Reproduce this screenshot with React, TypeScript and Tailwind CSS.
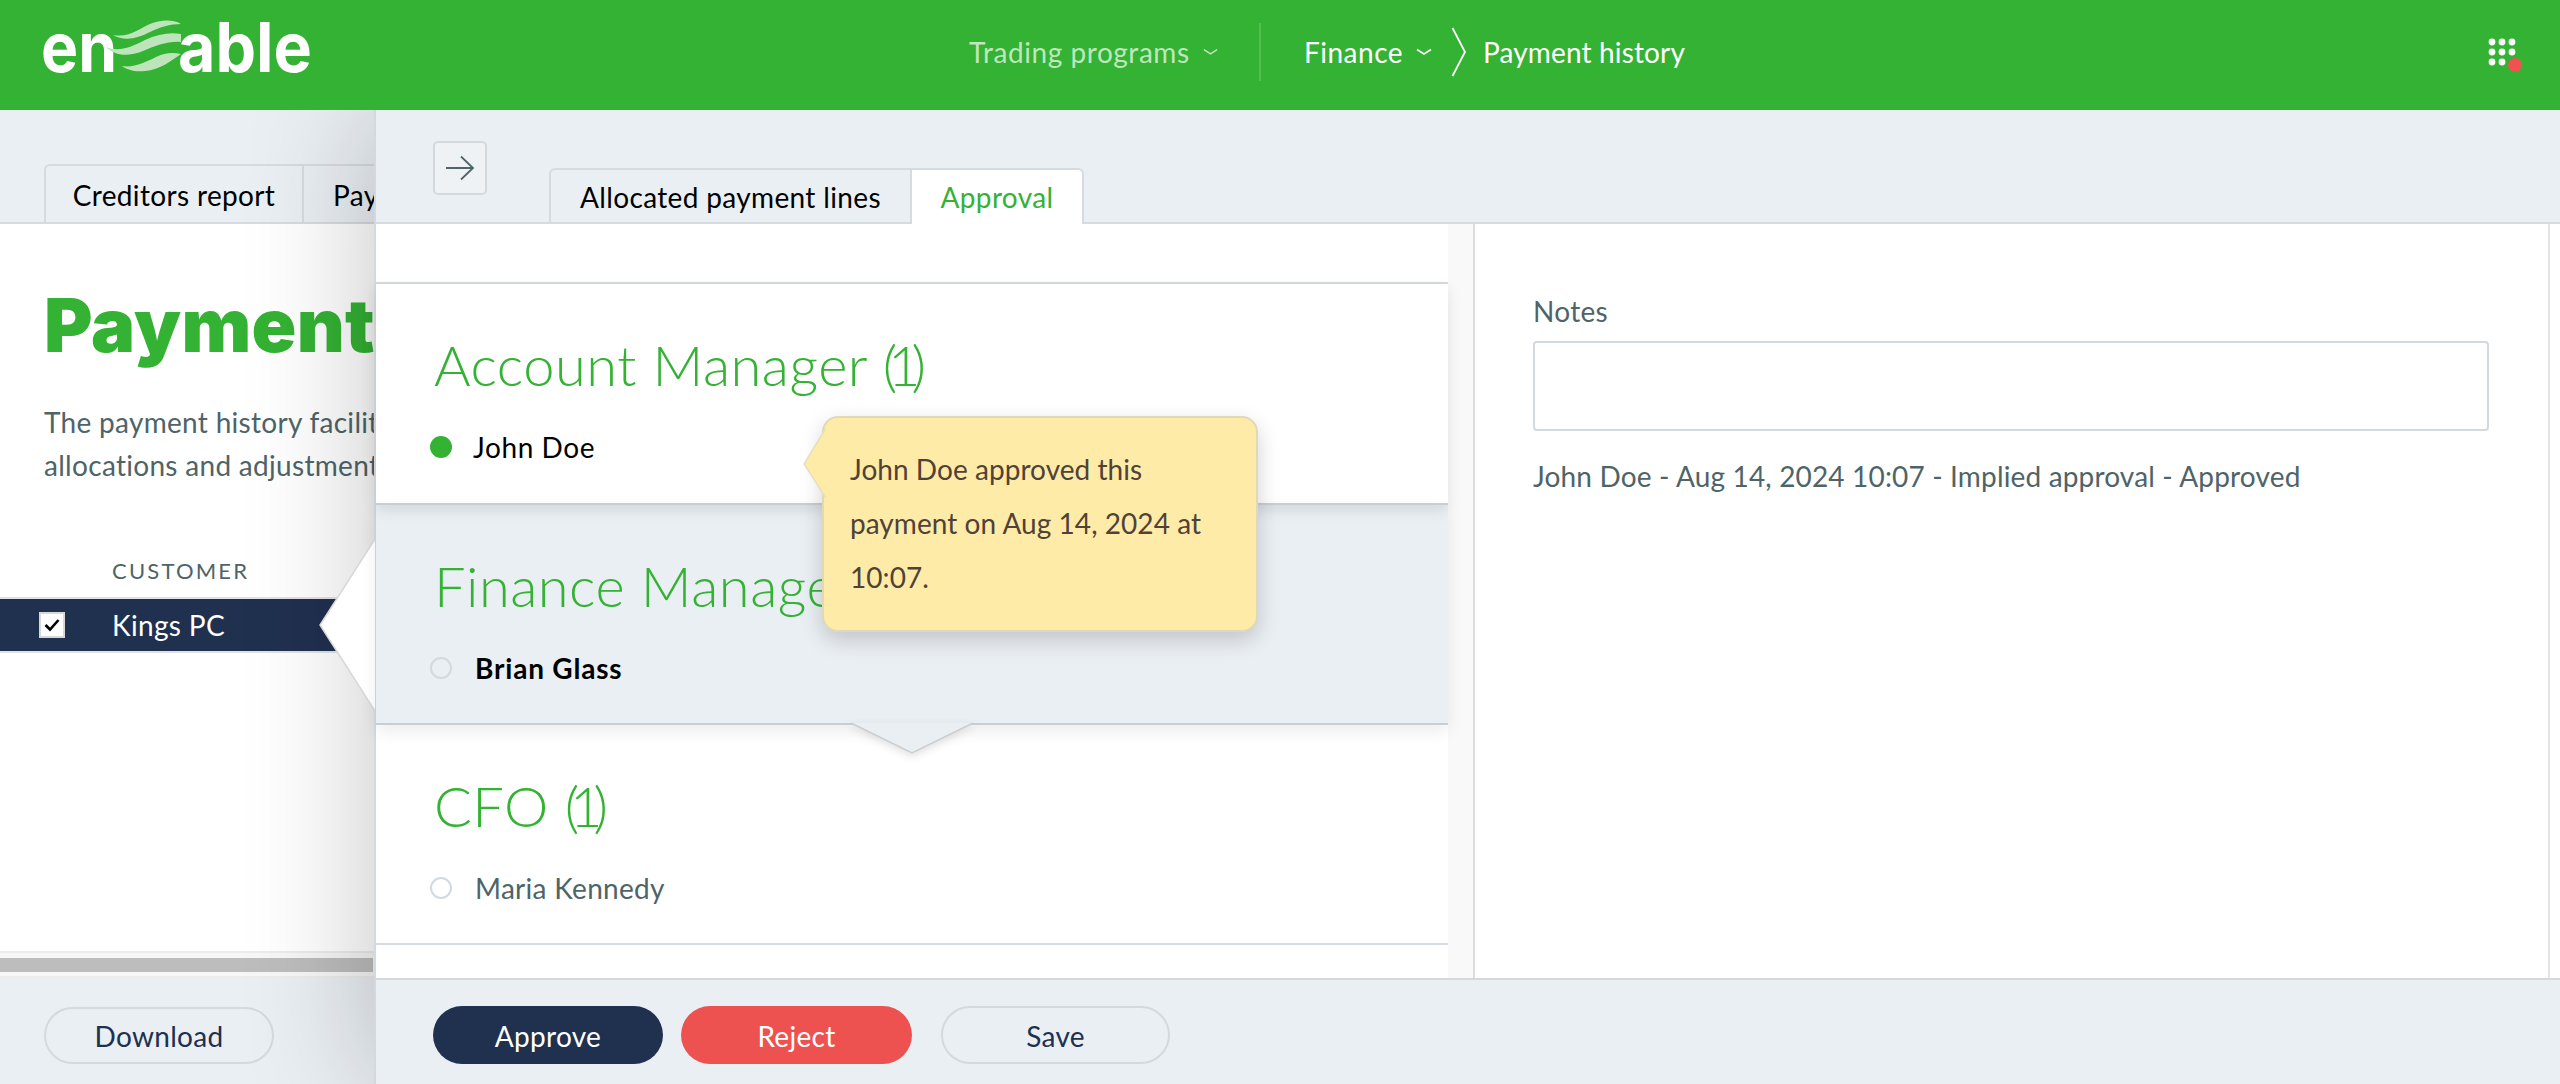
import React from "react";

const Chevron = ({ className }: { className: string }) => (
  <svg viewBox="0 0 16 8" className={className} fill="none" stroke="currentColor" strokeWidth="1.6">
    <path d="M1 1.5 L8 6 L15 1.5" />
  </svg>
);

const Logo = () => (
  <svg viewBox="40 15 275 62" className="w-[275px] h-[62px]">
    <text x="41" y="72" fontFamily="Inter" fontWeight="700" fontSize="69" fill="#fff" textLength="76" lengthAdjust="spacingAndGlyphs">en</text>
    <text x="178" y="72" fontFamily="Inter" fontWeight="700" fontSize="69" fill="#fff" textLength="134" lengthAdjust="spacingAndGlyphs">able</text>
    <g fill="#bde4bb">
      <path d="M113 35 C130 38 140 28 150 24 C160 20 172 19 181 24 C170 24 160 27 150 32 C138 38 125 42 113 35Z" />
      <path d="M106 47 C118 52 130 48 145 40 C158 34 170 32 181 34 L181 42 C168 41 155 46 143 51 C128 57 115 56 106 47Z" />
      <path d="M122 66 C134 68 146 62 156 57 C164 53 172 52 181 54 C172 60 160 70 145 71 C135 72 127 70 122 66Z" />
    </g>
  </svg>
);

const Dots = () => (
  <svg viewBox="0 0 40 40" className="w-[40px] h-[40px]">
    <g fill="#fff">
      {[4, 14, 24].map((y) =>
        [4, 14, 24].map((x) => (x === 24 && y === 24 ? null : <circle key={`${x}-${y}`} cx={x} cy={y} r="3.4" />))
      )}
    </g>
    <circle cx="27" cy="27" r="7" fill="#ef5350" />
  </svg>
);

const Section = ({
  title,
  name,
  dot,
  nameClass,
  className,
  children,
}: {
  title: string;
  name: string;
  dot: boolean;
  nameClass: string;
  className: string;
  children?: React.ReactNode;
}) => (
  <section className={`relative shrink-0 pl-[54px] flex flex-col ${className}`}>
    <h2 className="ml-[4px] mt-[47px] text-[56px] leading-[68px] font-light text-[#34b233] tracking-[0.5px] whitespace-nowrap">
      {title} <span className="tracking-[-9px]">(1)</span>
    </h2>
    <div className="mt-[31px] flex items-center h-[34px]">
      <span
        className={`w-[22px] h-[22px] rounded-full ${
          dot ? "bg-[#34b233] mr-[21px]" : "border-2 border-[#d3dadf] mr-[23px]"
        }`}
      />
      <span className={`text-[28px] ${nameClass}`}>{name}</span>
    </div>
    {children}
  </section>
);

export default function App() {
  return (
    <div className="w-[2560px] h-[1084px] flex flex-col overflow-hidden bg-[#eaeff4] font-['Lato',sans-serif] text-[28px] text-[#4e6468]">
      <header className="relative z-30 h-[110px] shrink-0 bg-[#34b233] flex items-center pb-[6px]">
        <div className="absolute left-[40px] top-[15px]">
          <Logo />
        </div>
        <nav className="ml-[969px] flex items-center text-white">
          <span className="text-[#bfe6bd] w-[221px] whitespace-nowrap tracking-[0.55px]">Trading programs</span>
          <Chevron className="w-[15px] h-[8px] ml-[13px] text-[#bfe6bd]" />
          <span className="w-[2px] h-[58px] bg-[#52bf50] ml-[41px]" />
          <span className="ml-[43px] whitespace-nowrap w-[99px] tracking-[0.5px]">Finance</span>
          <Chevron className="w-[16px] h-[8px] ml-[13px]" />
          <svg viewBox="0 0 16 50" className="w-[16px] h-[50px] ml-[19px]" fill="none" stroke="#fff" strokeWidth="1.8">
            <path d="M1.5 1 L14 25 L1.5 49" />
          </svg>
          <span className="ml-[16px] whitespace-nowrap tracking-[0.15px]">Payment history</span>
        </nav>
        <div className="absolute left-[2488px] top-[38px]">
          <Dots />
        </div>
      </header>

      <div className="flex-1 flex min-h-0">
        {/* Underlying page */}
        <div className="relative w-[374px] shrink-0 flex flex-col overflow-hidden">
          <div className="h-[114px] shrink-0 flex items-end pl-[44px] border-b-2 border-[#d5dbe1] whitespace-nowrap text-black">
            <div className="h-[58px] w-[260px] shrink-0 border-2 border-b-0 border-[#d5dbe1] rounded-tl-[6px] flex items-center justify-center pt-[2px] tracking-[0.35px]">
              Creditors report
            </div>
            <div className="h-[58px] w-[200px] shrink-0 border-t-2 border-r-2 border-[#d5dbe1] pl-[29px] pt-[2px] flex items-center tracking-[0.35px]">
              Payment history
            </div>
          </div>
          <div className="flex-1 bg-white min-h-0 whitespace-nowrap">
            <h1 className="mt-[55px] pl-[44px] text-[74px] leading-[92px] font-['Inter',sans-serif] font-black tracking-[0.3px] text-[#34b233]">
              Payment history
            </h1>
            <p className="mt-[30px] pl-[44px] leading-[43px] tracking-[0.3px]">
              The payment history facility shows
              <br />
              allocations and adjustments
            </p>
            <div className="mt-[67px] pl-[112px] h-[32px] flex items-center text-[22px] tracking-[2.2px]">CUSTOMER</div>
            <div className="mt-[11px] h-[56px] bg-[#20304f] border-y-2 border-[#dfe3e7] flex items-center text-white">
              <span className="ml-[39px] w-[26px] h-[26px] bg-white border-2 border-[#d8d8d8] flex items-center justify-center">
                <svg viewBox="0 0 16 14" className="w-[16px] h-[14px]" fill="none" stroke="#000" strokeWidth="2.6">
                  <path d="M1.5 7 L6 11.5 L14.5 2" />
                </svg>
              </span>
              <span className="ml-[47px] tracking-[0.35px]">Kings PC</span>
            </div>
          </div>
          <div className="h-[27px] shrink-0 bg-[#f7f7f7] border-y-2 border-[#ececec] flex items-center">
            <div className="h-[14px] w-[373px] bg-[#bdbdbd]" />
          </div>
          <div className="h-[106px] shrink-0 pl-[44px] pt-[29px]">
            <button className="w-[230px] h-[57px] rounded-full border-2 border-[#d3d9de] text-[#20304f] text-[28px] tracking-[0.3px]">
              Download
            </button>
          </div>
        </div>

        {/* Slide-over panel */}
        <div className="relative z-10 flex-1 min-w-0 flex flex-col border-l-2 border-[#d3d9de] bg-[#eaeff4] shadow-[0_0_120px_rgba(0,0,0,0.24)]">
          <svg viewBox="0 0 56 172" className="absolute left-[-57px] top-[429px] w-[56px] h-[172px]">
            <polygon points="56,0 1,86 56,172" fill="#fff" />
            <path d="M56 0 L1 86 L56 172" fill="none" stroke="#d5d8dc" strokeWidth="1.5" />
          </svg>
          <div className="h-[114px] shrink-0 flex border-b-2 border-[#d5dbe1] pl-[57px]">
            <button className="mt-[31px] w-[54px] h-[54px] rounded-[5px] border-2 border-[#d3d9de] bg-[#eef2f5] flex items-center justify-center text-[#4e6468]">
              <svg viewBox="0 0 30 26" className="w-[30px] h-[26px]" fill="none" stroke="currentColor" strokeWidth="1.8">
                <path d="M1 13 H28 M16 1.5 L28 13 L16 24.5" />
              </svg>
            </button>
            <div className="ml-[62px] mt-[58px] h-[58px] flex whitespace-nowrap">
              <div className="w-[363px] border-2 border-b-0 border-[#d5dbe1] rounded-tl-[6px] flex items-center justify-center pb-[2px] text-black tracking-[0.35px]">
                Allocated payment lines
              </div>
              <div className="w-[172px] bg-white border-2 border-l-0 border-b-0 border-[#d5dbe1] rounded-tr-[6px] flex items-center justify-center pb-[2px] text-[#34b233] tracking-[0.35px]">
                Approval
              </div>
            </div>
          </div>

          <div className="flex-1 min-h-0 flex">
            <div className="w-[1072px] shrink-0 bg-white flex flex-col">
              <div className="h-[60px] shrink-0 border-b-2 border-[#d5dbe1]" />
              <Section
                title="Account Manager"
                name="John Doe"
                dot
                nameClass="text-black tracking-[0.6px]"
                className="h-[221px] z-20 border-b-2 border-[#c9ced3] shadow-[0_5px_14px_rgba(0,0,0,0.1)]"
              >
                <div className="absolute left-[446px] top-[132px] w-[436px] h-[216px] rounded-[16px] bg-[#ffeba8] border-2 border-[#dfd9b8] shadow-[0_8px_22px_rgba(0,0,0,0.18)] pl-[26px] pt-[24px] text-[#4f4237] leading-[54px] tracking-[0.05px]">
                  <svg viewBox="0 0 24 70" className="absolute left-[-22px] top-[10px] w-[24px] h-[70px]">
                    <polygon points="24,0 2,36 24,70" fill="#ffeba8" />
                    <path d="M24 0 L2 36 L24 70" fill="none" stroke="#e6dfc0" strokeWidth="1.5" />
                  </svg>
                  John Doe approved this
                  <br />
                  payment on Aug 14, 2024 at
                  <br />
                  10:07.
                </div>
              </Section>
              <Section
                title="Finance Manager"
                name="Brian Glass"
                dot={false}
                nameClass="font-bold text-black tracking-[0.8px]"
                className="h-[220px] z-10 bg-[#eaeff4] border-b-2 border-[#c9ced3] shadow-[0_6px_16px_rgba(0,0,0,0.08)]"
              >
                <svg viewBox="0 0 124 32" className="absolute left-[474px] top-[218px] w-[124px] h-[32px] overflow-visible drop-shadow-[0_3px_4px_rgba(0,0,0,0.12)]">
                  <polygon points="1,0 62,30 123,0" fill="#eaeff4" />
                  <path d="M1 0 L62 30 L123 0" fill="none" stroke="#c9ced3" strokeWidth="1.5" />
                </svg>
              </Section>
              <Section
                title="CFO"
                name="Maria Kennedy"
                dot={false}
                nameClass="tracking-[0.3px]"
                className="h-[220px] border-b-2 border-[#d5dbe1]"
              />
              <div className="flex-1" />
            </div>
            <div className="w-[27px] shrink-0 bg-[#f9f9f9] border-r-2 border-[#d9dde0]" />
            <div className="flex-1 min-w-0 bg-white px-[58px] pt-[70px]">
              <div className="leading-[34px] tracking-[0.3px]">Notes</div>
              <div className="mt-[13px] h-[90px] w-[956px] rounded-[4px] border-2 border-[#d3d9dc]" />
              <div className="mt-[28px] leading-[34px] whitespace-nowrap tracking-[0.16px]">
                John Doe - Aug 14, 2024 10:07 - Implied approval - Approved
              </div>
            </div>
            <div className="w-[12px] shrink-0 bg-white border-l-2 border-[#e2e5e8]" />
          </div>

          <div className="h-[106px] shrink-0 border-t-2 border-[#d3d9de] pl-[57px] flex items-start pt-[26px] gap-[18px]">
            <button className="w-[230px] h-[58px] rounded-full bg-[#20304f] text-white text-[28px] pt-[2px] tracking-[0.3px]">Approve</button>
            <button className="w-[231px] h-[58px] rounded-full bg-[#ee5250] text-white text-[28px] pt-[2px] tracking-[0.3px]">Reject</button>
            <button className="ml-[11px] w-[229px] h-[58px] rounded-full border-2 border-[#d3d9de] text-[#20304f] text-[28px] pt-[2px] tracking-[0.3px]">Save</button>
          </div>
        </div>
      </div>
    </div>
  );
}
